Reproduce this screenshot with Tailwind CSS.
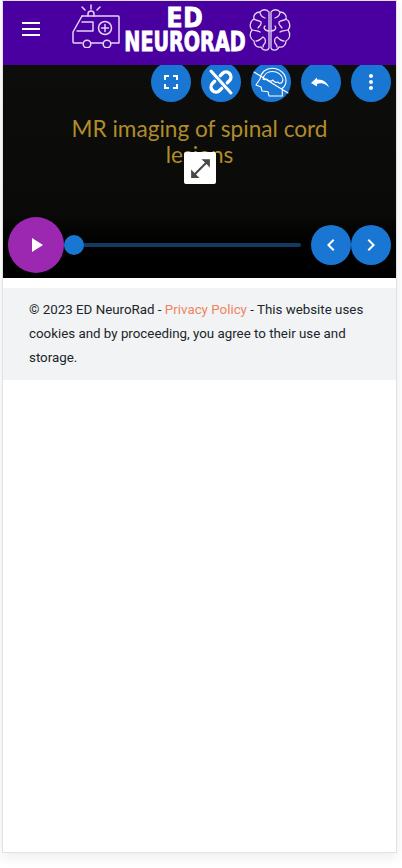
<!DOCTYPE html>
<html lang="en">
<head>
<meta charset="utf-8">
<title>ED NeuroRad</title>
<script src="https://cdn.jsdelivr.net/npm/@tailwindcss/browser@4"></script>
</head>
<body class="bg-white font-['Roboto',sans-serif]">
<div class="w-[402px] h-[868px] overflow-hidden">
    <div class="ml-[2px] w-[395px] h-[853px] bg-white border border-[#e2e2e2] shadow-[0_4px_12px_rgba(0,0,0,0.08)]">

        <!-- Top bar -->
        <header class="h-[64px] bg-[#4a00a0] flex items-center">
            <button class="w-[56px] pl-[19px] flex flex-col gap-[3.500px] mb-[8px]">
                <span class="block w-[18px] h-[2.500px] bg-white"></span>
                <span class="block w-[18px] h-[2.500px] bg-white"></span>
                <span class="block w-[18px] h-[2.500px] bg-white"></span>
            </button>
            <div class="flex items-center">
                <svg class="ml-[12px] mb-[16px] w-[50px] h-[46px]" viewBox="0 0 50 46" fill="none" stroke="#e4d4f6" stroke-width="1.500" stroke-linecap="round" stroke-linejoin="round">
                    <path d="M11 14h36a1 1 0 0 1 1 1v26h-8"/>
                    <path d="M11 14l-9 16v10a1 1 0 0 0 1 1h8"/>
                    <path d="M32 41H20"/>
                    <circle cx="16" cy="42" r="3.800"/>
                    <circle cx="36" cy="42" r="3.800"/>
                    <path d="M11 20h11v9H6"/>
                    <circle cx="34" cy="26" r="6.500"/>
                    <path d="M34 22.500v7M30.500 26h7"/>
                    <path d="M17 14v-2a3 3 0 0 1 6 0v2"/>
                    <path d="M20 7V3M14 8l-3-3M26 8l3-3"/>
                </svg>
                <div class="w-[124px] ml-[2px] mb-[6px] text-center text-white font-['DejaVu_Sans',sans-serif] font-bold [-webkit-text-stroke:1px_white]">
                    <div class="text-[26px] leading-[23px] tracking-[1px] scale-x-[0.9]">ED</div>
                    <div class="text-[27px] leading-[23px] scale-x-[0.71] whitespace-nowrap origin-center -mx-[30px]">NEURORAD</div>
                </div>
                <svg class="ml-[2px] mb-[4px] w-[42px] h-[46px]" viewBox="0 0 42 46" fill="none" stroke="#e4d4f6" stroke-width="1.300" stroke-linecap="round" stroke-linejoin="round">
                    <path d="M20 4c-2-3-7-3-9 0-4 0-7 3-6 7-4 2-5 8-2 11-3 4-2 9 2 11 0 4 3 7 7 6 2 4 7 4 8 1z"/>
                    <path d="M22 4c2-3 7-3 9 0 4 0 7 3 6 7 4 2 5 8 2 11 3 4 2 9-2 11 0 4-3 7-7 6-2 4-7 4-8 1z"/>
                    <path d="M11 4c0 3 2 5 5 6M5 11c2 2 5 1 7 3 1 3-2 4-3 6M3 22c3 1 6 0 8 2M16 18c-2 2 0 5 4 5M7 33c3 0 5-2 7-4 2 1 3 3 2 6M14 39c0-2 1-3 2-4"/>
                    <path d="M31 4c0 3-2 5-5 6M37 11c-2 2-5 1-7 3-1 3 2 4 3 6M39 22c-3 1-6 0-8 2M26 18c2 2 0 5-4 5M35 33c-3 0-5-2-7-4-2 1-3 3-2 6M28 39c0-2-1-3-2-4"/>
                </svg>
            </div>
        </header>

        <!-- Player -->
        <div class="relative h-[213px] overflow-hidden bg-gradient-to-b from-[#0d0d0b] via-[#0a0a08] via-70% to-black">
            <p class="pt-[51px] text-center text-[22.600px] leading-[26px] font-normal text-[#b08c2a] font-['Lato',sans-serif] px-[60px]">MR imaging of spinal cord lesions</p>

            <div class="absolute left-[181px] top-[87px] w-[32px] h-[32px] rounded-[2px] bg-white flex items-center justify-center">
                <svg class="w-[25px] h-[25px]" viewBox="0 0 24 24" fill="#484848"><path d="M21 11V3h-8l3.290 3.290-10 10L3 13v8h8l-3.290-3.290 10-10z"/></svg>
            </div>

            <!-- Top controls -->
            <div class="absolute left-[148px] top-[-3px] flex gap-[10px]">
                <button class="w-[40px] h-[40px] rounded-full bg-[#1976d2] flex items-center justify-center">
                    <svg class="w-[24px] h-[24px]" viewBox="0 0 24 24" fill="white"><path d="M7 14H5v5h5v-2H7v-3zm-2-4h2V7h3V5H5v5zm12 7h-3v2h5v-5h-2v3zM14 5v2h3v3h2V5h-5z"/></svg>
                </button>
                <button class="w-[40px] h-[40px] rounded-full bg-[#1976d2] flex items-center justify-center">
                    <svg class="w-[32px] h-[32px]" viewBox="0 0 32 32" fill="none" stroke="white" stroke-linecap="round">
                        <g transform="rotate(-45 16 16)" stroke-width="3.400">
                            <path d="M12 11H9a5 5 0 0 0 0 10h3"/>
                            <path d="M20 11h3a5 5 0 0 1 0 10h-3"/>
                        </g>
                        <path d="M6 5l20 22" stroke-width="3"/>
                    </svg>
                </button>
                <button class="w-[40px] h-[40px] rounded-full bg-[#1976d2] flex items-center justify-center">
                    <svg class="w-[36px] h-[36px]" viewBox="0 0 36 36" fill="none" stroke="white" stroke-width="1.100" stroke-linecap="round" stroke-linejoin="round">
                        <path d="M16 32L15 27.700 9 27 8 23 3 21 7 15C8 8 13 4.300 19 4.300 27 4.300 33 10 33 17 33 20 31 23 29.300 24.300V32Z"/>
                        <path d="M10 15C11 10 15 7.500 19 7.500 25 7.500 29.500 11 30 16 29 20 26 20 25 18 23 19 21 18 20 16 18 18 15 17 14 15 12 16 11 16 10 15Z"/>
                        <path d="M1 8l34 21"/>
                    </svg>
                </button>
                <button class="w-[40px] h-[40px] rounded-full bg-[#1976d2] flex items-center justify-center">
                    <svg class="w-[24px] h-[24px]" viewBox="0 0 24 24" fill="white"><path d="M8 9.500V7.500L2 13l6 3.500V14c4-1.500 8-1 12 3.500-1.500-5-6-8.500-12-8z"/></svg>
                </button>
                <button class="w-[40px] h-[40px] rounded-full bg-[#1976d2] flex items-center justify-center">
                    <svg class="w-[24px] h-[24px]" viewBox="0 0 24 24" fill="white"><path d="M12 8c1.100 0 2-.9 2-2s-.9-2-2-2-2 .9-2 2 .9 2 2 2zm0 2c-1.100 0-2 .9-2 2s.9 2 2 2 2-.9 2-2-.9-2-2-2zm0 6c-1.100 0-2 .9-2 2s.9 2 2 2 2-.9 2-2-.9-2-2-2z"/></svg>
                </button>
            </div>

            <!-- Bottom controls -->
            <div class="absolute left-[5px] right-[5px] bottom-[5px] flex items-center">
                <button class="w-[56px] h-[56px] shrink-0 rounded-full bg-[#9c27b0] flex items-center justify-center">
                    <svg class="w-[24px] h-[24px]" viewBox="0 0 24 24" fill="white"><path d="M8 5v14l11-7z"/></svg>
                </button>
                <div class="relative w-[237px] h-[4px] rounded-full bg-[#123a63]">
                    <span class="absolute left-0 top-[-8px] w-[20px] h-[20px] rounded-full bg-[#1976d2]"></span>
                </div>
                <button class="ml-[10px] w-[40px] h-[40px] shrink-0 rounded-full bg-[#1976d2] flex items-center justify-center">
                    <svg class="w-[24px] h-[24px]" viewBox="0 0 24 24" fill="white"><path d="M15.410 7.410 14 6l-6 6 6 6 1.410-1.410L10.830 12z"/></svg>
                </button>
                <button class="w-[40px] h-[40px] shrink-0 rounded-full bg-[#1976d2] flex items-center justify-center">
                    <svg class="w-[24px] h-[24px]" viewBox="0 0 24 24" fill="white"><path d="M10 6 8.590 7.410 13.170 12l-4.580 4.590L10 18l6-6z"/></svg>
                </button>
            </div>
        </div>

        <!-- Footer note -->
        <div class="mt-[10px] h-[92px] bg-[#f1f3f5] pl-[26px] pr-[20px] py-[10px] text-[13.330px] leading-[24px] text-[#212529]">
            © 2023 ED NeuroRad - <a class="text-[#f0845f]">Privacy Policy</a> - This website uses cookies and by proceeding, you agree to their use and storage.
        </div>
    </div>
</div>
</body>
</html>
